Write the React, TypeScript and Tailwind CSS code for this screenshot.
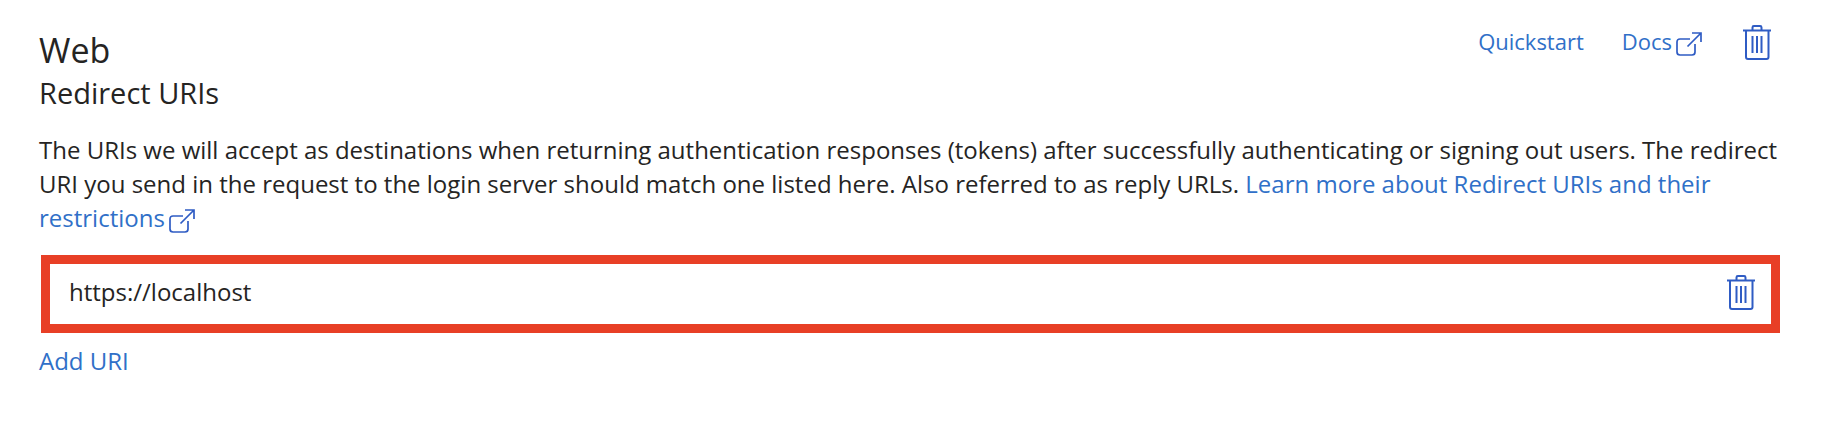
import { useState } from "react";

function TrashIcon() {
  return (
    <svg width="30" height="36" viewBox="0 0 30 36" fill="none" stroke="#2f5cc4" strokeWidth="2" aria-hidden="true">
      <path d="M1 6.500H29" />
      <path d="M10.500 6V3.400Q10.500 2 11.900 2H18.100Q19.500 2 19.500 3.400V6" />
      <path d="M4 6.500V33Q4 35 6 35H24.500Q26.500 35 26.500 33V6.500" />
      <path d="M10.500 12V29M15 12V29M19.500 12V29" />
    </svg>
  );
}

function ExternalIcon() {
  return (
    <svg className="inline-block align-top" width="26" height="34" viewBox="0 0 26 34" fill="none" stroke="#2f5cc4" strokeWidth="1.700" aria-hidden="true">
      <path d="M14 15H4Q1 15 1 18V28Q1 31 4 31H16Q19 31 19 28V20" />
      <path d="M11.500 22.500L25 9M16 9H25V18" />
    </svg>
  );
}

const link = "text-[#3070c8] hover:underline";

export default function App() {
  const [uris, setUris] = useState(["https://localhost"]);

  return (
    <main className="min-h-screen bg-white pl-[39px] pr-[46px] pt-6 font-['Open_Sans','Noto_Sans',sans-serif] text-[24px] leading-[34px] text-[#252423]">
      <header className="flex items-start justify-between">
        <div>
          <h1 className="pt-1 text-[34px] leading-[44px]">Web</h1>
          <h2 className="text-[29px] leading-[42px]">Redirect URIs</h2>
        </div>
        <nav className="flex items-start pr-2 text-[22px]">
          <a href="#quickstart" className={link}>Quickstart</a>
          <a href="#docs" className={`ml-[38px] flex gap-1 ${link}`}>
            Docs
            <ExternalIcon />
          </a>
          <button type="button" aria-label="Delete platform" className="ml-10">
            <TrashIcon />
          </button>
        </nav>
      </header>

      <p className="mt-[19px]">
        The URIs we will accept as destinations when returning authentication responses (tokens) after successfully authenticating or signing out users. The redirect URI you send in the request to the login server should match one listed here. Also referred to as reply URLs.{" "}
        <a href="#redirect-uris" className={link}>
          Learn more about Redirect URIs and their{" "}
          <span className="inline-flex gap-1 align-top">
            restrictions
            <ExternalIcon />
          </span>
        </a>
      </p>

      <ul className="ml-0.5 mt-5 border-[9px] border-[#e83f26]">
        {uris.map((uri, i) => (
          <li key={i} className="flex items-center pb-[14px] pl-[19px] pr-[15px] pt-[10px]">
            <input
              type="text"
              aria-label="Redirect URI"
              value={uri}
              onChange={(e) => setUris(uris.map((u, j) => (j === i ? e.target.value : u)))}
              className="min-w-0 flex-1 bg-transparent outline-none"
            />
            <button type="button" aria-label="Delete URI" onClick={() => setUris(uris.filter((_, j) => j !== i))}>
              <TrashIcon />
            </button>
          </li>
        ))}
      </ul>

      <button type="button" className={`mt-[11px] ${link}`} onClick={() => setUris([...uris, ""])}>
        Add URI
      </button>
    </main>
  );
}
